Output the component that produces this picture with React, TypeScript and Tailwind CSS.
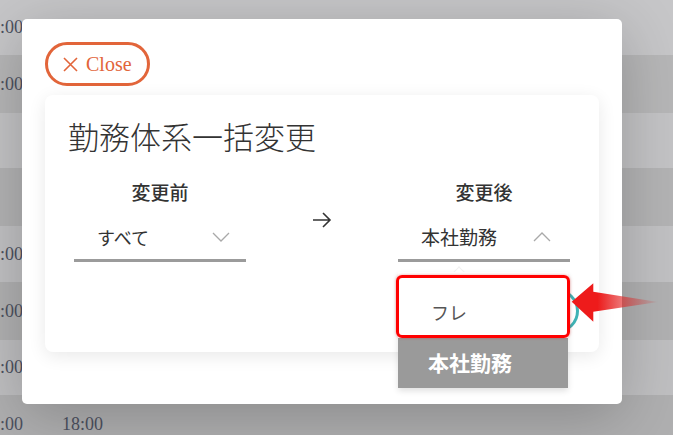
const rows = [
  { h: "h-[55px]", bg: "bg-[#c6c6c8]", a: ":00", b: "" },
  { h: "h-[58px]", bg: "bg-[#b6b6b7]", a: ":00", b: "" },
  { h: "h-[55px]", bg: "bg-[#c3c3c5]", a: "", b: "" },
  { h: "h-[58px]", bg: "bg-[#b3b3b4]", a: "", b: "" },
  { h: "h-[56px]", bg: "bg-[#c1c1c3]", a: ":00", b: "" },
  { h: "h-[58px]", bg: "bg-[#b1b1b2]", a: ":00", b: "" },
  { h: "h-[55px]", bg: "bg-[#bfbfc1]", a: ":00", b: "" },
  { h: "h-[58px]", bg: "bg-[#afafb0]", a: ":00", b: "18:00" },
];

const jp = "font-['Noto_Sans_CJK_JP','Noto_Sans',sans-serif]";

function Chevron({ up }: { up?: boolean }) {
  return (
    <svg width="18" height="10" viewBox="0 0 18 10" fill="none">
      <polyline
        points={up ? "1,9 9,1 17,9" : "1,1 9,9 17,1"}
        stroke="#a9a9a9"
        strokeWidth="1.3"
      />
    </svg>
  );
}

export default function App() {
  return (
    <div className="relative h-[435px] w-[673px] overflow-hidden font-['Liberation_Serif',serif]">
      {/* dimmed table behind */}
      {rows.map((r, i) => (
        <div key={i} className={`flex items-center ${r.h} ${r.bg} text-[18px] text-[#4d5160]`}>
          <span className="w-[62px]">{r.a}</span>
          <span>{r.b}</span>
        </div>
      ))}

      {/* modal */}
      <div className="absolute left-[22px] top-[19px] h-[385px] w-[600px] rounded-[5px] bg-white px-[23px] pt-[23px] shadow-[0_12px_60px_rgba(0,0,0,0.22)]">
        <button className="flex h-[44px] w-[105px] items-center gap-[8px] rounded-full border-[3px] border-[#e2653a] pl-[15px] text-[20px] text-[#e2653a]">
          <svg width="15" height="15" viewBox="0 0 15 15">
            <path d="M1 1 L14 14 M14 1 L1 14" stroke="#e2653a" strokeWidth="1.6" />
          </svg>
          <span>Close</span>
        </button>

        <div className={`relative mt-[9px] rounded-[8px] bg-white px-[23px] pt-[21px] pb-[90px] shadow-[0_4px_18px_rgba(0,0,0,0.09)] ${jp}`}>
          {/* partially hidden round button */}
          <div className="absolute left-[490px] top-[194px] h-[44px] w-[44px] rounded-full border-[3px] border-[#3fb3b5]" />

          <h2 className="text-[31px] font-light leading-[40px] text-[#333]">勤務体系一括変更</h2>

          <div className="mt-[22px] flex justify-between px-[6px]">
            <div className="flex w-[172px] flex-col items-center">
              <div className="text-[19px] font-medium leading-[28px] text-[#333]">変更前</div>
              <div className="mt-[9px] flex h-[47px] w-full items-center justify-between border-b-[3px] border-[#9b9b9b] pl-[23px] pr-[16px] text-[18px] text-[#333]">
                <span>すべて</span>
                <Chevron />
              </div>
            </div>

            <svg className="mt-[33px]" width="20" height="18" viewBox="0 0 20 18" fill="none">
              <path d="M1 9 H18 M11 2 L18 9 L11 16" stroke="#333" strokeWidth="1.6" />
            </svg>

            <div className="relative flex w-[172px] flex-col items-center">
              <div className="text-[19px] font-medium leading-[28px] text-[#333]">変更後</div>
              <div className="mt-[9px] flex h-[47px] w-full items-center justify-between border-b-[3px] border-[#9b9b9b] pl-[23px] pr-[19px] text-[19px] text-[#333]">
                <span>本社勤務</span>
                <Chevron up />
              </div>

              {/* open menu */}
              <div className="absolute left-0 top-[94px] w-[170px] shadow-[0_3px_6px_rgba(0,0,0,0.12)]">
                <div className="absolute -top-[4px] left-[57px] h-[8px] w-[8px] rotate-45 border-l border-t border-[#f0f0f0] bg-white" />
                <div className="relative h-[66px] bg-white pl-[33px] pt-[28px] text-[18px] leading-[24px] text-[#555]">
                  フレ
                  <div className="absolute -left-[2px] -right-[2px] bottom-0 top-[3px] rounded-[6px] border-[3px] border-[#ff0000] shadow-[0_0_3px_rgba(200,0,0,0.4)]" />
                </div>
                <div className="flex h-[50px] items-center bg-[#9a9a9a] pl-[30px] text-[21px] font-bold text-white">
                  本社勤務
                </div>
              </div>
            </div>
          </div>
        </div>
      </div>

      {/* annotation arrow */}
      <svg className="absolute left-[565px] top-[278px]" width="100" height="48" viewBox="0 0 100 48">
        <defs>
          <linearGradient id="fade" x1="0" y1="0" x2="1" y2="0">
            <stop offset="0.3" stopColor="#ee1b1b" stopOpacity="1" />
            <stop offset="1" stopColor="#d02828" stopOpacity="0.05" />
          </linearGradient>
        </defs>
        <polygon
          points="6.7,23.7 28.3,5.3 28.3,13.7 93,24 28.3,33.7 28.3,43.7"
          fill="url(#fade)"
        />
      </svg>
    </div>
  );
}
